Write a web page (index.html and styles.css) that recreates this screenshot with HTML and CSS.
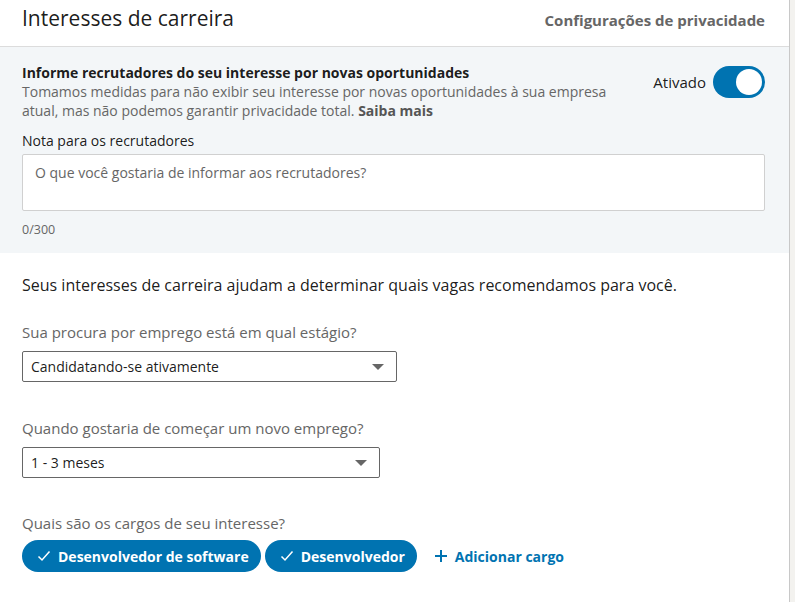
FILE: index.html
```html
<!DOCTYPE html>
<html lang="pt-BR">
<head>
<meta charset="utf-8">
<link rel="stylesheet" href="styles.css">
</head>
<body>
<div class="page">
  <div class="card">
    <header class="head">
      <h1 class="title">Interesses de carreira</h1>
      <a class="privacy">Configurações de privacidade</a>
    </header>
    <section class="recruiters">
      <div class="rec-top">
        <div class="rec-text">
          <div class="rec-title">Informe recrutadores do seu interesse por novas oportunidades</div>
          <div class="rec-desc">Tomamos medidas para não exibir seu interesse por novas oportunidades à sua empresa atual, mas não podemos garantir privacidade total. <b>Saiba mais</b></div>
        </div>
        <div class="toggle-wrap">
          <span class="toggle-label">Ativado</span>
          <span class="toggle"><span class="knob"></span></span>
        </div>
      </div>
      <label class="note-label">Nota para os recrutadores</label>
      <div class="textarea">O que você gostaria de informar aos recrutadores?</div>
      <div class="counter">0/300</div>
    </section>
    <section class="prefs">
      <p class="intro">Seus interesses de carreira ajudam a determinar quais vagas recomendamos para você.</p>
      <div class="field">
        <div class="field-label">Sua procura por emprego está em qual estágio?</div>
        <div class="select select-a">Candidatando-se ativamente<span class="caret"></span></div>
      </div>
      <div class="field">
        <div class="field-label">Quando gostaria de começar um novo emprego?</div>
        <div class="select select-b">1 - 3 meses<span class="caret"></span></div>
      </div>
      <div class="field field-last">
        <div class="field-label">Quais são os cargos de seu interesse?</div>
        <div class="pills">
          <span class="pill"><svg class="check" viewBox="0 0 16 16" width="16" height="16"><path d="M2.5 8.5 L6 12 L13.5 3.5" fill="none" stroke="#fff" stroke-width="1.5"/></svg>Desenvolvedor de software</span>
          <span class="pill"><svg class="check" viewBox="0 0 16 16" width="16" height="16"><path d="M2.5 8.5 L6 12 L13.5 3.5" fill="none" stroke="#fff" stroke-width="1.5"/></svg>Desenvolvedor</span>
          <span class="add"><svg class="plus" viewBox="0 0 16 16" width="16" height="16"><path d="M8 2 V14 M2 8 H14" stroke="#0073b1" stroke-width="2"/></svg>Adicionar cargo</span>
        </div>
      </div>
    </section>
  </div>
</div>
</body>
</html>
```

FILE: styles.css
```css
* { box-sizing: border-box; }
html, body { margin: 0; padding: 0; }
body {
  font-family: "Open Sans", "Noto Sans", sans-serif;
  background: #f3f2ef;
  color: rgba(0,0,0,0.9);
  width: 795px;
  height: 602px;
  overflow: hidden;
}
.page { display: flex; }
.card {
  width: 790px;
  height: 602px;
  background: #fff;
  border-right: 1px solid #c8c8c8;
}
.head {
  height: 47px;
  display: flex;
  align-items: center;
  justify-content: space-between;
  padding: 0 24px 0 22px;
  border-bottom: 1px solid #dcdcdc;
}
.title {
  margin: 0;
  font-size: 21px;
  font-weight: 400;
  line-height: 32px;
  margin-top: -10px;
  color: rgba(0,0,0,0.9);
}
.privacy {
  font-size: 15px;
  font-weight: 700;
  color: #666;
  margin-top: -6px;
}
.recruiters {
  background: #f3f6f8;
  padding: 16px 24px 14px 22px;
  height: 206px;
}
.rec-top { display: flex; justify-content: space-between; align-items: flex-start; }
.rec-text { width: 600px; }
.rec-title { font-size: 14px; font-weight: 700; line-height: 19px; }
.rec-desc { font-size: 14px; line-height: 19px; color: #666; }
.rec-desc b { color: #555; font-weight: 700; }
.toggle-wrap { display: flex; align-items: center; gap: 7px; margin-top: 3px; }
.toggle-label { font-size: 15px; }
.toggle {
  width: 52px; height: 32px; border-radius: 16px; background: #0073b1;
  display: flex; align-items: center; justify-content: flex-end; padding-right: 3px;
}
.knob { width: 26px; height: 26px; border-radius: 50%; background: #fff; }
.note-label { display: block; font-size: 14px; line-height: 19px; margin-top: 11px; }
.textarea {
  margin-top: 4px;
  height: 57px;
  background: #fff;
  border: 1px solid #d0d0d0;
  border-radius: 2px;
  padding: 8px 12px;
  font-size: 14px;
  color: #666;
}
.counter { font-size: 12.5px; color: #666; margin-top: 10px; }
.prefs { padding: 21px 24px 0 22px; }
.intro { margin: 0; font-size: 16px; line-height: 22px; }
.field { margin-top: 26px; }
.field + .field { margin-top: 36px; }
.field + .field-last { margin-top: 35px; }
.field-label { font-size: 15px; color: #666; line-height: 20px; }
.select {
  margin-top: 9px;
  height: 31px;
  border: 1px solid #666;
  border-radius: 2px;
  display: flex; align-items: center; justify-content: space-between;
  padding: 0 12px 0 8px;
  font-size: 14px;
  color: rgba(0,0,0,0.9);
}
.select-a { width: 375px; }
.select-b { width: 358px; }
.caret { width: 0; height: 0; border-left: 6px solid transparent; border-right: 6px solid transparent; border-top: 6px solid #666; }
.pills { display: flex; align-items: center; gap: 4px; margin-top: 7px; }
.pill {
  display: inline-flex; align-items: center; gap: 6px;
  height: 32px; padding: 0 12px 0 14px;
  border-radius: 16px; background: #0073b1; color: #fff;
  font-size: 14px; font-weight: 700;
}
.add { display: inline-flex; align-items: center; gap: 6px; margin-left: 12px; color: #0073b1; font-size: 14px; font-weight: 700; }
```
